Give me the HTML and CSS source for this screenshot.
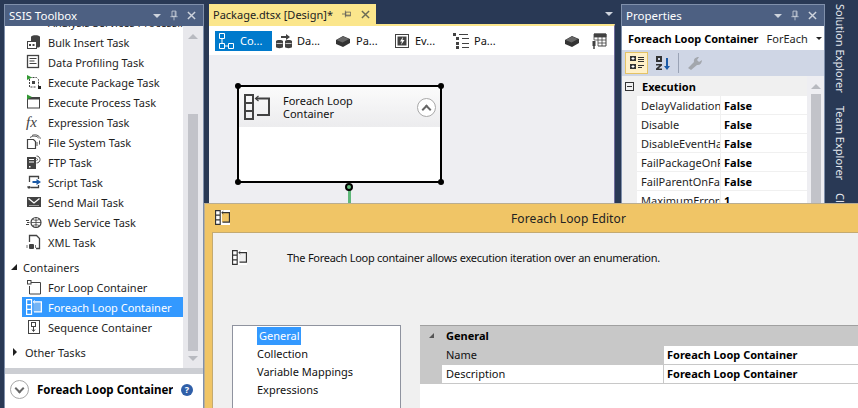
FILE: index.html
```html
<!DOCTYPE html>
<html lang="en">

<head>
    <meta charset="UTF-8">
    <title>Foreach Loop Editor</title>
    <link rel="stylesheet" href="styles.css">
</head>

<body>
    <svg class="defs">
        <symbol id="i-foreach" viewBox="0 0 26 26">
            <g fill="none" stroke="currentColor" stroke-width="2">
                <path d="M12 4.500h13V21H12z" fill="var(--box, none)" stroke="none" />
                <path d="M1 1h8v24H1zM1 9h8M1 17h8M12 4.500h13V21H13" />
                <path d="M14.500 2l-3 2.500 3 2.500" stroke-width="1.200" />
            </g>
        </symbol>
        <symbol id="i-pin" viewBox="0 0 10 12">
            <path d="M2.500 .5h5v6.500h-5zM6.500 1v6M.5 7.500h9M5 8v4" fill="none" stroke="currentColor" />
        </symbol>
        <symbol id="i-pin-side" viewBox="0 0 12 10">
            <path d="M5 2.500h6.500v5H5zM5 6.500h6M4.500 .5v9M0 5h4" fill="none" stroke="currentColor" />
        </symbol>
        <symbol id="i-close" viewBox="0 0 10 10">
            <path d="M1 1l8 8M9 1l-8 8" fill="none" stroke="currentColor" stroke-width="1.600" />
        </symbol>
        <symbol id="i-bulk" viewBox="0 0 16 16">
            <path d="M5 3c0-2.500 9-2.500 9 0v9c0 1-1 1.500-3 1.500H5z" fill="#424242" />
            <rect x="1.500" y="7.500" width="9" height="7" fill="#fff" stroke="#424242" />
            <path d="M3 10h2v2H3zM6.500 10h2v2h-2z" fill="#424242" />
        </symbol>
        <symbol id="i-profile" viewBox="0 0 16 16">
            <rect x="1.500" y="1.500" width="11" height="12" fill="none" stroke="#424242" stroke-width="1.300" />
            <path d="M3.500 4h7v1h-7zM3.500 6.500h5v1h-5zM3.500 9h7v1h-7z" fill="#424242" />
        </symbol>
        <symbol id="i-pkg" viewBox="0 0 16 16">
            <path d="M3.500 3.500h7l2 2v8" fill="none" stroke="#424242" stroke-dasharray="2 1" />
            <path d="M3.500 5v8h6" fill="none" stroke="#424242" stroke-dasharray="2 1" />
            <path d="M6 7h3v3H6z" fill="#424242" />
            <path d="M12 12h3v3h-3z" fill="#222" />
            <path d="M1 1l5 2.500L1 6z" fill="#339933" />
        </symbol>
        <symbol id="i-proc" viewBox="0 0 16 16">
            <rect x="1.500" y="3.500" width="12" height="10.500" fill="#fff" stroke="#424242" />
            <path d="M1 3h13v2.500H1z" fill="#424242" />
            <path d="M1 .5l5 2.500-5 2.500z" fill="#339933" />
        </symbol>
        <symbol id="i-file" viewBox="0 0 16 16">
            <path d="M1.500 5.500h6l2 2v7h-8z" fill="none" stroke="#424242" stroke-width="1.200" />
            <path d="M4 3.500c3-2 7-2 9 1M6 1.500c3-1.500 7-.5 8.500 3M11 8v4M13.500 6.500v4" fill="none" stroke="#555" />
        </symbol>
        <symbol id="i-ftp" viewBox="0 0 16 16">
            <path d="M1 3h9v12H1z" fill="#424242" />
            <path d="M3 5h5v1H3zM3 7.500h5v1H3zM3 12h1.500v1.500H3z" fill="#fff" />
            <path d="M10.500 2c2 0 3.500 1.500 3.500 3.500S12.500 9 10.500 9M10.500 4.500c.6 0 1 .5 1 1s-.4 1-1 1" fill="none" stroke="#555" />
        </symbol>
        <symbol id="i-script" viewBox="0 0 16 16">
            <path d="M3.500 8V2.500h9V5M12.500 11v2.500H5" fill="none" stroke="#424242" stroke-width="1.300" />
            <path d="M1 12.500l3-.5 1 1.500-1 1H2z" fill="#424242" />
            <path d="M6.500 7h4V5l4.500 3-4.500 3V9h-4z" fill="#1c5aa6" />
        </symbol>
        <symbol id="i-mail" viewBox="0 0 16 16">
            <rect x="1" y="3" width="14" height="10" fill="#424242" />
            <path d="M2.500 4.500L8 9l5.500-4.500" fill="none" stroke="#fff" stroke-width="1.300" />
            <path d="M3 11.500h10v.5H3z" fill="#fff" />
        </symbol>
        <symbol id="i-web" viewBox="0 0 16 16">
            <path d="M0 6h3v1H0zM1 8h2.500v1H1zM0 10h3v1H0z" fill="#424242" />
            <circle cx="10" cy="8.500" r="5" fill="none" stroke="#424242" stroke-width="1.200" />
            <path d="M5 8.500h10M10 3.500v10M7 5.500c2 1 4 1 6 0M7 11.500c2-1 4-1 6 0" fill="none" stroke="#424242" stroke-width=".8" />
        </symbol>
        <symbol id="i-xml" viewBox="0 0 16 16">
            <path d="M3.500 8V1.500h7l3 3v10H10" fill="none" stroke="#424242" stroke-width="1.300" />
            <rect x="3" y="10" width="5" height="5" rx="1" fill="#424242" />
            <path d="M1 11v3M9.500 11v3" stroke="#777" />
        </symbol>
        <symbol id="i-for" viewBox="0 0 16 16">
            <path d="M5 3.500h9.500V15h-11V7" fill="none" stroke="#424242" />
            <rect x="1.500" y="1.500" width="3.500" height="3.500" fill="#fff" stroke="#424242" />
        </symbol>
        <symbol id="i-seq" viewBox="0 0 16 16">
            <rect x="2.500" y="1.500" width="11" height="13" fill="none" stroke="#424242" />
            <rect x="5.500" y="3.500" width="4" height="4" fill="none" stroke="#424242" />
            <path d="M7.500 8v4M6 10.500l1.500 2 1.500-2" fill="none" stroke="#424242" />
        </symbol>
        <symbol id="i-flow" viewBox="0 0 16 18">
            <g fill="none" stroke="currentColor">
                <path d="M1.500 1.500h5v5h-5zM1.500 11.500h5v5h-5zM10.500 11.500h5v5h-5zM4 6.500v5M6.500 14h4" />
            </g>
        </symbol>
        <symbol id="i-data" viewBox="0 0 16 16">
            <path d="M0 8c0-1.500 7-1.500 7 0v6c0 1.500-7 1.500-7 0zM9 8c0-1.500 7-1.500 7 0v6c0 1.500-7 1.500-7 0z" fill="#424242" />
            <path d="M.5 10.500h6M9.500 10.500h6" stroke="#fff" stroke-width=".7" />
            <path d="M5 3h5V1l4 3-4 3V5H5z" fill="#424242" />
        </symbol>
        <symbol id="i-chip" viewBox="0 0 16 16">
            <path d="M1 7l7-4 7 3v4l-7 4-7-3z" fill="#333" />
            <path d="M1.500 7l6.500-3.500 6 2.500-6.500 3.500z" fill="#666" />
        </symbol>
        <symbol id="i-event" viewBox="0 0 16 16">
            <rect x="1.500" y="1.500" width="13" height="13" fill="none" stroke="#424242" />
            <path d="M3.500 3.500h9v9h-9z" fill="#424242" />
            <path d="M9 4L6 8.500h2L7 12l3.500-5H8.500z" fill="#fff" />
        </symbol>
        <symbol id="i-tree" viewBox="0 0 16 16">
            <path d="M0 0h3v3H0zM3 4h3v3H3zM3 9h3v3H3zM3 13h3v3H3zM6 1h9v1H6zM9 5h7v1H9zM9 10h7v1H9zM9 14h7v1H9z" fill="#424242" />
        </symbol>
        <symbol id="i-grid" viewBox="0 0 16 16">
            <path d="M3 1h12v12H7" fill="none" stroke="#424242" />
            <path d="M3 1h12v3H3zM3 4v3M7 4v9M11 4v9M3 7h12M7 10h8" fill="#424242" stroke="#424242" stroke-width=".8" />
            <rect x="1.500" y="8" width="3" height="5" fill="#424242" />
            <path d="M3 13v3" stroke="#424242" stroke-width="1.500" />
        </symbol>
        <symbol id="i-cat" viewBox="0 0 16 16">
            <path d="M1 1h6v5H1zM1 9h6v5H1zM9 2h6v1H9zM9 4h6v1H9zM9 6h6v1H9zM9 10h6v1H9zM9 12h4v1H9z" fill="#333" />
            <path d="M2.500 3.500h3M4 2v3M2.500 11.500h3M4 10v3" stroke="#fff" />
        </symbol>
        <symbol id="i-sort" viewBox="0 0 16 16">
            <path d="M1 1h6v6H1zM1 9h6v1.500L3.500 13.500H7V15H1v-1.500l3.500-3H1z" fill="#333" />
            <path d="M3 3h2v2H3z" fill="#cfd6e5" />
            <path d="M11 3h2v8h2l-3 4-3-4h2z" fill="#1c5aa6" />
        </symbol>
        <symbol id="i-wrench" viewBox="0 0 16 16">
            <path d="M1 13l6-6c-.6-2.500 1-5 5-5l-2 3 2 2 3-2c0 3.500-2.500 5.500-5 5l-6 5z" fill="#a3a7ad" />
        </symbol>
    </svg>

    <div class="toolbox panel">
        <div class="panel-title">
            <span>SSIS Toolbox</span>
            <span class="title-btns">
                <span class="tri"></span>
                <svg class="pin"><use href="#i-pin" /></svg>
                <svg class="close"><use href="#i-close" /></svg>
            </span>
        </div>
        <div class="toolbox-main">
            <div class="toolbox-list">
                <div class="tool"><span class="ico"></span>Analysis Services Processing Task</div>
                <div class="tool"><svg class="ico"><use href="#i-bulk" /></svg>Bulk Insert Task</div>
                <div class="tool"><svg class="ico"><use href="#i-profile" /></svg>Data Profiling Task</div>
                <div class="tool"><svg class="ico"><use href="#i-pkg" /></svg>Execute Package Task</div>
                <div class="tool"><svg class="ico"><use href="#i-proc" /></svg>Execute Process Task</div>
                <div class="tool"><span class="ico fx">fx</span>Expression Task</div>
                <div class="tool"><svg class="ico"><use href="#i-file" /></svg>File System Task</div>
                <div class="tool"><svg class="ico"><use href="#i-ftp" /></svg>FTP Task</div>
                <div class="tool"><svg class="ico"><use href="#i-script" /></svg>Script Task</div>
                <div class="tool"><svg class="ico"><use href="#i-mail" /></svg>Send Mail Task</div>
                <div class="tool"><svg class="ico"><use href="#i-web" /></svg>Web Service Task</div>
                <div class="tool"><svg class="ico"><use href="#i-xml" /></svg>XML Task</div>
                <div class="group"><span class="arrow-open"></span>Containers</div>
                <div class="tool"><svg class="ico"><use href="#i-for" /></svg>For Loop Container</div>
                <div class="tool selected"><svg class="ico"><use href="#i-foreach" /></svg>Foreach Loop Container</div>
                <div class="tool"><svg class="ico"><use href="#i-seq" /></svg>Sequence Container</div>
                <div class="group"><span class="arrow-closed"></span>Other Tasks</div>
            </div>
            <div class="vscroll">
                <span class="up"></span>
                <span class="thumb"></span>
                <span class="down"></span>
            </div>
        </div>
        <div class="toolbox-info">
            <div class="info-head">
                <span class="round-btn down-chev"></span>
                <b>Foreach Loop Container</b>
                <span class="help">?</span>
            </div>
            <div class="info-text">Executes a control flow repeatedly by</div>
        </div>
    </div>

    <div class="document">
        <div class="tab-strip">
            <div class="doc-tab">
                <span>Package.dtsx [Design]*</span>
                <svg class="tab-pin"><use href="#i-pin-side" /></svg>
                <svg class="tab-close"><use href="#i-close" /></svg>
            </div>
            <span class="tri strip-tri"></span>
        </div>
        <div class="designer-bar">
            <div class="dtab active"><svg class="ico-flow"><use href="#i-flow" /></svg>Co...</div>
            <div class="dtab"><svg class="ico"><use href="#i-data" /></svg>Da...</div>
            <div class="dtab"><svg class="ico"><use href="#i-chip" /></svg>Pa...</div>
            <div class="dtab"><svg class="ico"><use href="#i-event" /></svg>Ev...</div>
            <div class="dtab"><svg class="ico"><use href="#i-tree" /></svg>Pa...</div>
            <div class="bar-right">
                <svg class="ico"><use href="#i-chip" /></svg>
                <svg class="ico"><use href="#i-grid" /></svg>
            </div>
        </div>
        <div class="canvas"></div>
    </div>

    <div class="properties panel">
        <div class="panel-title">
            <span>Properties</span>
            <span class="title-btns">
                <span class="tri"></span>
                <svg class="pin"><use href="#i-pin" /></svg>
                <svg class="close"><use href="#i-close" /></svg>
            </span>
        </div>
        <div class="prop-combo">
            <b>Foreach Loop Container</b>
            <span>ForEach</span>
            <span class="combo-arrow"></span>
        </div>
        <div class="prop-tools">
            <span class="prop-btn on"><svg class="ico"><use href="#i-cat" /></svg></span>
            <span class="prop-btn"><svg class="ico"><use href="#i-sort" /></svg></span>
            <span class="prop-sep"></span>
            <span class="prop-btn"><svg class="ico"><use href="#i-wrench" /></svg></span>
        </div>
        <div class="prop-main">
            <div class="prop-grid">
                <div class="prop-cat"><span class="minus"></span>Execution</div>
                <div class="prop-row"><span class="prop-name">DelayValidation</span><b>False</b></div>
                <div class="prop-row"><span class="prop-name">Disable</span><b>False</b></div>
                <div class="prop-row"><span class="prop-name">DisableEventHandlers</span><b>False</b></div>
                <div class="prop-row"><span class="prop-name">FailPackageOnFailure</span><b>False</b></div>
                <div class="prop-row"><span class="prop-name">FailParentOnFailure</span><b>False</b></div>
                <div class="prop-row"><span class="prop-name">MaximumErrorCount</span><b>1</b></div>
            </div>
            <div class="vscroll">
                <span class="up"></span>
                <span class="thumb"></span>
            </div>
        </div>
    </div>

    <div class="side-tabs">
        <span>Solution Explorer</span>
        <span>Team Explorer</span>
        <span>Class View</span>
    </div>

    <!-- task on the design surface -->
    <div class="node">
        <div class="node-head">
            <svg class="node-ico"><use href="#i-foreach" /></svg>
            <span class="node-name">Foreach Loop<br>Container</span>
            <span class="round-btn up-chev"></span>
        </div>
        <i class="grip tl"></i><i class="grip tr"></i><i class="grip bl"></i><i class="grip br"></i>
    </div>
    <div class="link"></div>
    <div class="link-dot"></div>

    <!-- modal dialog -->
    <div class="dialog">
        <div class="dialog-title">
            <svg class="dialog-ico"><use href="#i-foreach" /></svg>
            <span>Foreach Loop Editor</span>
        </div>
        <div class="dialog-body">
            <div class="dialog-desc">
                <svg class="desc-ico"><use href="#i-foreach" /></svg>
                <span>The Foreach Loop container allows execution iteration over an enumeration.</span>
            </div>
            <div class="dialog-panes">
                <div class="page-list">
                    <div class="page"><span class="current">General</span></div>
                    <div class="page">Collection</div>
                    <div class="page">Variable Mappings</div>
                    <div class="page">Expressions</div>
                </div>
                <div class="edit-grid">
                    <div class="edit-cat"><span class="arrow-small"></span><b>General</b></div>
                    <div class="edit-row name-row">
                        <span class="edit-name">Name</span>
                        <b class="edit-val">Foreach Loop Container</b>
                    </div>
                    <div class="edit-row desc-row">
                        <span class="edit-name">Description</span>
                        <b class="edit-val">Foreach Loop Container</b>
                    </div>
                </div>
            </div>
        </div>
    </div>
</body>

</html>
```

FILE: styles.css
```css
* {
    box-sizing: border-box;
}

body {
    margin: 0;
    width: 858px;
    height: 408px;
    overflow: hidden;
    position: relative;
    display: flex;
    align-items: flex-start;
    padding: 4px 0 0 4px;
    background: #293955;
    font-family: "Noto Sans", sans-serif;
    font-size: 11px;
    color: #1e1e1e;
}

.defs {
    display: none;
}

.ico {
    width: 16px;
    height: 16px;
    flex: none;
}

/* tool windows */
.panel {
    border: 1px solid #8090ab;
    border-bottom: 0;
    background: #fff;
    display: flex;
    flex-direction: column;
    overflow: hidden;
}

.panel-title {
    height: 21px;
    flex: none;
    background: #4d6082;
    color: #fff;
    font-size: 11.5px;
    padding-left: 4px;
    display: flex;
    align-items: center;
    justify-content: space-between;
}

.title-btns {
    display: flex;
    align-items: center;
    gap: 9px;
    padding-right: 7px;
    color: #ced4dd;
}

.tri {
    width: 0;
    height: 0;
    border: 4px solid transparent;
    border-top: 4px solid #ced4dd;
    border-bottom: 0;
}

.pin {
    width: 8px;
    height: 11px;
}

.close {
    width: 9px;
    height: 9px;
}

/* toolbox */
.toolbox {
    width: 200px;
    height: 404px;
    flex: none;
}

.toolbox-main {
    height: 342px;
    flex: none;
    display: flex;
    overflow: hidden;
}

.toolbox-list {
    width: 178px;
    flex: none;
    margin-top: -14px;
}

.tool {
    height: 20px;
    margin-left: 17px;
    padding-left: 4px;
    display: flex;
    align-items: center;
    gap: 6px;
    white-space: nowrap;
}

.tool.selected {
    background: #3399ff;
    color: #fff;
    --box: #74b4f5;
}

.fx {
    font-family: "Liberation Serif", serif;
    font-style: italic;
    font-size: 15px;
    color: #424242;
    line-height: 16px;
}

.group {
    height: 20px;
    margin-top: 5px;
    padding-left: 6px;
    display: flex;
    align-items: center;
    gap: 6px;
}

.arrow-open {
    width: 0;
    height: 0;
    border-left: 6px solid transparent;
    border-bottom: 6px solid #1e1e1e;
}

.arrow-closed {
    width: 0;
    height: 0;
    margin-left: 2px;
    margin-right: 2px;
    border: 4px solid transparent;
    border-left: 4px solid #1e1e1e;
    border-right: 0;
}

.vscroll {
    flex: 1;
    background: #e8e8ec;
    display: flex;
    flex-direction: column;
    align-items: center;
}

.vscroll .up {
    width: 0;
    height: 0;
    margin: 8px 0 5px;
    border: 5px solid transparent;
    border-bottom: 5px solid #b8bac0;
    border-top: 0;
}

.vscroll .thumb {
    width: 10px;
    flex: 1;
    background: #c2c3c9;
}

.toolbox .vscroll .thumb {
    flex: none;
    height: 237px;
    margin-top: 70px;
}

.vscroll .down {
    width: 0;
    height: 0;
    margin-top: 5px;
    border: 5px solid transparent;
    border-top: 5px solid #b8bac0;
    border-bottom: 0;
}

.toolbox-info {
    flex: 1;
    border-top: 6px solid #ccced3;
    overflow: hidden;
}

.info-head {
    display: flex;
    align-items: center;
    padding: 2px 0 0 5px;
    gap: 8px;
    height: 29px;
}

.info-head b {
    width: 136px;
    font-size: 11.5px;
    overflow: hidden;
    white-space: nowrap;
    color: #000;
}

.info-text {
    padding: 3px 0 0 8px;
    white-space: nowrap;
}

.round-btn {
    width: 19px;
    height: 19px;
    border: 1px solid #a8a8a8;
    border-radius: 50%;
    background: #fff;
    flex: none;
    display: flex;
    align-items: center;
    justify-content: center;
}

.round-btn::before {
    content: "";
    width: 5px;
    height: 5px;
    border-left: 2px solid #666;
    border-top: 2px solid #666;
}

.up-chev::before {
    margin-top: 3px;
    transform: rotate(45deg);
}

.down-chev::before {
    margin-top: -3px;
    transform: rotate(225deg);
}

.help {
    width: 12px;
    height: 12px;
    border-radius: 50%;
    background: #2f5fa8;
    color: #fff;
    font-size: 9px;
    font-weight: bold;
    line-height: 12px;
    text-align: center;
}

/* document well */
.document {
    width: 406px;
    height: 404px;
    flex: none;
    margin-left: 5px;
    display: flex;
    flex-direction: column;
}

.tab-strip {
    height: 20px;
    flex: none;
    display: flex;
    justify-content: space-between;
    align-items: center;
}

.doc-tab {
    width: 167px;
    height: 20px;
    background: #fbe68c;
    display: flex;
    align-items: center;
    padding: 0 6px 0 4px;
    color: #222;
    white-space: nowrap;
}

.tab-pin {
    width: 9px;
    height: 8px;
    margin-left: auto;
    color: #555;
}

.tab-close {
    width: 9px;
    height: 9px;
    margin-left: 10px;
    color: #6b6b55;
}

.strip-tri {
    margin-right: 2px;
}

.designer-bar {
    height: 31px;
    flex: none;
    background: #fff;
    border-top: 2px solid #fbe68c;
    border-right: 1px solid #6f6c9c;
    display: flex;
    align-items: center;
    padding-left: 6px;
}

.dtab {
    height: 20px;
    width: 59px;
    padding-left: 1px;
    display: flex;
    align-items: center;
    gap: 5px;
    color: #111;
}

.dtab.active {
    width: 57px;
    margin-right: 3px;
    padding-left: 3px;
    gap: 6px;
    background: #007acc;
    color: #fff;
}

.ico-flow {
    width: 16px;
    height: 18px;
}

.bar-right {
    margin-left: auto;
    display: flex;
    gap: 11px;
    padding-right: 7px;
}

.canvas {
    flex: 1;
    background: #eeeef2;
    border-right: 1px solid #6f6c9c;
}

/* properties */
.properties {
    width: 204px;
    height: 404px;
    flex: none;
    margin-left: 6px;
}

.prop-combo {
    height: 24px;
    flex: none;
    display: flex;
    align-items: center;
    padding-left: 6px;
    gap: 8px;
    white-space: nowrap;
}

.prop-combo b {
    color: #000;
}

.combo-arrow {
    width: 0;
    height: 0;
    border: 3px solid transparent;
    border-top: 3px solid #222;
    border-bottom: 0;
}

.prop-tools {
    height: 26px;
    flex: none;
    background: #cfd6e5;
    display: flex;
    align-items: center;
    padding-left: 3px;
    gap: 3px;
}

.prop-btn {
    width: 23px;
    height: 22px;
    display: flex;
    align-items: center;
    justify-content: center;
    border: 1px solid transparent;
}

.prop-btn.on {
    background: #fff0c8;
    border-color: #e5c365;
}

.prop-sep {
    width: 1px;
    height: 20px;
    margin: 0 1px;
    background: #9aa3b5;
}

.prop-main {
    flex: 1;
    display: flex;
    overflow: hidden;
}

.prop-grid {
    width: 185px;
    flex: none;
}

.prop-cat {
    height: 20px;
    display: flex;
    align-items: center;
    gap: 8px;
    padding-left: 3px;
    font-weight: bold;
    background: #f0f0f0;
    color: #000;
}

.minus {
    width: 9px;
    height: 9px;
    border: 1px solid #333;
    background: linear-gradient(#333, #333) center / 5px 1px no-repeat;
}

.prop-row {
    height: 19px;
    margin-left: 15px;
    display: flex;
    align-items: center;
    background: #fff;
    border-bottom: 1px solid #f0f0f0;
    box-shadow: -15px 0 0 #f0f0f0;
}

.prop-name {
    width: 84px;
    height: 18px;
    line-height: 20px;
    flex: none;
    padding-left: 4px;
    overflow: hidden;
    white-space: nowrap;
    border-right: 1px solid #f0f0f0;
}

.prop-row b {
    padding-left: 3px;
    color: #000;
}

.properties .vscroll {
    background: #eeeef2;
}

.properties .vscroll .thumb {
    flex: 1;
}

/* auto hidden windows on the right */
.side-tabs {
    flex: none;
    margin-left: 5px;
    display: flex;
    flex-direction: column;
    gap: 13px;
    width: 20px;
    height: 240px;
    color: #e6e9ef;
    font-size: 11px;
    line-height: 20px;
}

.side-tabs span {
    writing-mode: vertical-rl;
    white-space: nowrap;
}

/* design surface item */
.node {
    position: absolute;
    left: 237px;
    top: 85px;
    width: 205px;
    height: 98px;
    border: 2px solid #000;
    border-radius: 2px;
    background: #fff;
}

.node-head {
    height: 40px;
    display: flex;
    align-items: flex-start;
    padding: 7px 4px 0 5px;
    background: linear-gradient(#fbfbfb, #ececee);
}

.node-ico {
    width: 26px;
    height: 26px;
    color: #424242;
    flex: none;
}

.node-name {
    margin-left: 13px;
    line-height: 13px;
    color: #111;
    flex: 1;
}

.node-head .round-btn {
    margin-top: 4px;
}

.grip {
    position: absolute;
    width: 6px;
    height: 6px;
    border-radius: 50%;
    background: #000;
}

.tl { left: -4px; top: -4px; }
.tr { right: -4px; top: -4px; }
.bl { left: -4px; bottom: -4px; }
.br { right: -4px; bottom: -4px; }

.link {
    position: absolute;
    left: 348px;
    top: 189px;
    width: 3px;
    height: 15px;
    background: #5fb87a;
}

.link-dot {
    position: absolute;
    left: 345px;
    top: 183px;
    width: 8px;
    height: 8px;
    border: 2px solid #000;
    border-radius: 50%;
    background: #5fb87a;
}

/* dialog */
.dialog {
    position: absolute;
    left: 204px;
    top: 203px;
    width: 654px;
    height: 205px;
    background: #f0c566;
    border-top: 1px solid #b9ad92;
    border-left: 1px solid #b9ad92;
    display: flex;
    flex-direction: column;
    --box: #f0c566;
}

.dialog-title {
    height: 28px;
    flex: none;
    display: flex;
    align-items: center;
    justify-content: center;
    font-size: 12px;
    letter-spacing: 0.1px;
    color: #222;
    position: relative;
    padding-left: 74px;
}

.dialog-ico {
    position: absolute;
    left: 10px;
    top: 6px;
    width: 15px;
    height: 15px;
    color: #333;
    background: #fff;
}

.dialog-body {
    flex: 1;
    margin-left: 7px;
    background: #f0f0f0;
    border-top: 1px solid #c4aa70;
    border-left: 1px solid #c4aa70;
    overflow: hidden;
}

.dialog-desc {
    height: 92px;
    padding: 17px 0 0 19px;
    display: flex;
    align-items: flex-start;
    color: #111;
    line-height: 16px;
    letter-spacing: -0.27px;
}

.desc-ico {
    width: 15px;
    height: 15px;
    margin-right: 40px;
    color: #333;
    background: #fff;
    --box: #f0f0f0;
    flex: none;
}

.dialog-panes {
    display: flex;
    padding-left: 19px;
    height: 100px;
}

.page-list {
    width: 169px;
    flex: none;
    background: #fff;
    border: 1px solid #8f939f;
    padding: 1px 0 0 24px;
}

.page {
    height: 18px;
    line-height: 18px;
    color: #111;
}

.current {
    display: inline-block;
    width: 44px;
    padding-left: 2px;
    background: #3399ff;
    color: #fff;
}

.edit-grid {
    flex: 1;
    margin-left: 19px;
    background: #fff;
    border-top: 1px solid #a0a0a0;
}

.edit-cat {
    height: 20px;
    background: #c8c8c8;
    display: flex;
    align-items: center;
    padding: 0 0 1px 9px;
    gap: 12px;
    color: #000;
}

.arrow-small {
    width: 0;
    height: 0;
    border-left: 5px solid transparent;
    border-bottom: 5px solid #555;
}

.edit-row {
    height: 19px;
    display: flex;
    align-items: center;
    border-bottom: 1px solid #c8c8c8;
}

.edit-name {
    width: 221px;
    height: 18px;
    line-height: 18px;
    padding-left: 4px;
    margin-left: 22px;
    flex: none;
    color: #111;
}

.name-row {
    background: #c8c8c8;
}

.desc-row {
    box-shadow: inset 22px 0 0 #c8c8c8;
}

.desc-row .edit-name {
    background: #fff;
}

.edit-val {
    flex: 1;
    height: 18px;
    line-height: 18px;
    padding-left: 3px;
    background: #fff;
    border-left: 1px solid #c8c8c8;
    color: #000;
}
```
